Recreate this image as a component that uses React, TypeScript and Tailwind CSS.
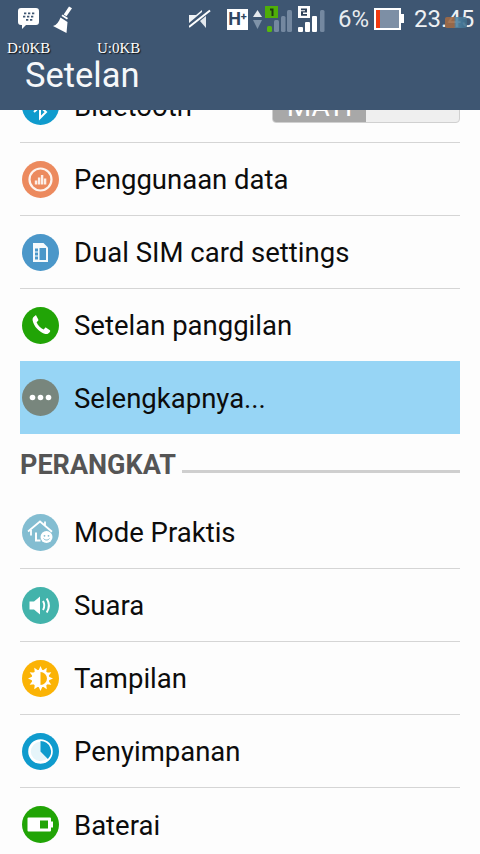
import React from 'react';

const Circle: React.FC<{ color: string; children?: React.ReactNode }> = ({ color, children }) => (
  <svg width="37" height="37" viewBox="0 0 37 37" className="shrink-0">
    <circle cx="18.5" cy="18.5" r="18.5" fill={color} />
    {children}
  </svg>
);

const DataIcon = () => (
  <Circle color="#ec8a5e">
    <circle cx="18.5" cy="18.5" r="11" fill="none" stroke="#fff" strokeWidth="2.2" opacity="0.9" />
    <path d="M12.8 19.5h2.5v4h-2.500zM15.900 16.500h2.400v7h-2.400zM18.900 14h2.400v9.500h-2.400zM21.900 17.500h2.400v6h-2.400z" fill="#fff" opacity="0.85" />
  </Circle>
);

const SimIcon = () => (
  <Circle color="#4b97c9">
    <path d="M11 9h10.500l4.500 4.500V28H11z" fill="#fff" opacity="0.95" />
    <path d="M13 14.500h3v3h-3zM13 18.500h3v3h-3zM13 22.500h3v3h-3zM17.500 14h6.500v12h-6.500z" fill="#4b97c9" />
  </Circle>
);

const PhoneIcon = () => (
  <Circle color="#21a406">
    <path d="M13.200 8.800c-1.600.8-3 2.300-2.600 4.500 1.100 6.100 6.900 12.300 12.700 13.700 2.300.5 3.900-1 4.800-2.600.2-.4.100-.8-.2-1.100l-3.700-2.500c-.4-.3-.9-.2-1.200.1l-1.400 1.500c-3-1.100-5.900-4.100-7-7.200l1.500-1.400c.3-.3.400-.8.200-1.200l-2-3.900c-.2-.5-.7-.6-1.100-.3z" fill="#fff" />
  </Circle>
);

const MoreIcon = () => (
  <Circle color="#78867d">
    <circle cx="10.500" cy="18.500" r="2.800" fill="#fff" />
    <circle cx="18.500" cy="18.500" r="2.800" fill="#fff" />
    <circle cx="26.500" cy="18.500" r="2.800" fill="#fff" />
  </Circle>
);

const HomeIcon = () => (
  <Circle color="#83bdd1">
    <path d="M6 17.500 18 7.500l5 4.200V7.500M23 11.700l7 6" fill="none" stroke="#fff" strokeWidth="1.800" />
    <path d="M9 16v5.500" fill="none" stroke="#fff" strokeWidth="1.800" />
    <path d="M14 18.500v8h4.500" fill="none" stroke="#fff" strokeWidth="2" />
    <circle cx="24.500" cy="23" r="6" fill="#fff" />
    <circle cx="22.500" cy="21.800" r="0.900" fill="#83bdd1" />
    <circle cx="26.500" cy="21.800" r="0.900" fill="#83bdd1" />
    <path d="M21.500 24.500c1.500 2 4.500 2 6 0" fill="none" stroke="#83bdd1" strokeWidth="1" />
  </Circle>
);

const SoundIcon = () => (
  <Circle color="#43b3ab">
    <path d="M7.500 14.500h4.500l6-5v18l-6-5H7.500z" fill="#fff" />
    <path d="M21 14c1.600 2.800 1.600 6.200 0 9M24.700 11.500c2.700 4.300 2.700 9.700 0 14" fill="none" stroke="#fff" strokeWidth="2" />
  </Circle>
);

const SunIcon = () => {
  const rays = Array.from({ length: 12 }, (_, i) => i * 30);
  return (
    <Circle color="#fbb305">
      {rays.map(r => (
        <path key={r} d="M18.500 6l2 4.500h-4z" fill="#fff" transform={`rotate(${r} 18.500 18.500)`} />
      ))}
      <circle cx="18.500" cy="18.500" r="9" fill="#fff" />
      <path d="M18.500 12a6.500 6.500 0 0 1 0 13z" fill="#fbb305" />
    </Circle>
  );
};

const StorageIcon = () => (
  <Circle color="#0f9bcd">
    <circle cx="18.500" cy="18.500" r="11" fill="#e6f5fa" stroke="#fff" strokeWidth="2.600" />
    <path d="M18.500 8.500a10 10 0 1 1-10 10 10 10 0 0 1 2.900-7l7.100 7z" fill="none" />
    <path d="M18.500 8a10.500 10.500 0 0 1 7.400 17.900L18.500 18.500z" fill="#0f9bcd" />
  </Circle>
);

const BatteryIcon = () => (
  <Circle color="#21a406">
    <path d="M6.500 11.500h21.500a1 1 0 0 1 1 1v3h2v6h-2v3a1 1 0 0 1-1 1H6.500a1 1 0 0 1-1-1v-12a1 1 0 0 1 1-1z" fill="#fff" />
    <rect x="18" y="14.500" width="8" height="8" fill="#21a406" />
  </Circle>
);

const BluetoothIcon = () => (
  <Circle color="#0f9bcd">
    <path d="M12 13l12 11-6 6V7l6 6-12 11" fill="none" stroke="#fff" strokeWidth="2" />
  </Circle>
);

const Row: React.FC<{ icon: React.ReactNode; label: string; active?: boolean; last?: boolean; short?: boolean; right?: React.ReactNode }> = ({
  icon,
  label,
  active,
  last,
  short,
  right,
}) => (
  <div
    className={`flex items-center ${short ? 'h-[72px]' : 'h-[73px]'} pl-[2px] ${active ? 'bg-[#97d5f5]' : ''} ${
      last ? '' : 'border-b border-[#d5d5d5]'
    }`}
  >
    {icon}
    <span className="ml-[15px] pt-[2px] text-[27.5px] leading-none text-[#0c0c0c] whitespace-nowrap">{label}</span>
    {right}
  </div>
);

const StatusBar = () => (
  <div className="flex items-center h-[38px] pl-[17px] text-white">
    <svg width="23" height="24" viewBox="0 0 23 24">
      <path d="M4 1h15a3 3 0 0 1 3 3v11a3 3 0 0 1-3 3H9l-4 4v-4H4a3 3 0 0 1-3-3V4a3 3 0 0 1 3-3z" fill="#fff" />
      <path d="M7 5.500h2.300v1.800H7zM11 5.500h2.300v1.800H11zM15 5.500h2.300v1.800H15zM6 8.800h2.300v1.800H6zM10 8.800h2.300v1.800H10zM14 8.800h2.300v1.800H14zM9 12h2.300v1.800H9zM13 12h2.300v1.800H13z" fill="#3e5672" />
    </svg>
    <svg width="20" height="27" viewBox="0 0 20 27" className="ml-[13px]">
      <path d="M16 0.500l3 1.700-5.500 8-2.800-1.700z" fill="#fff" />
      <path d="M9.500 8.500l5.500 3.500-1 1.500-5.500-3.500z" fill="#fff" />
      <path d="M7.500 11.500l7 4.500L13.500 27 0 20c3.500-1 6-4 7.500-8.500z" fill="#fff" />
    </svg>
    <svg width="22" height="20" viewBox="0 0 22 20" className="ml-[116px]">
      <path d="M0 6h7l6-5v2L0 14z" fill="#f0f3f6" />
      <path d="M11 12l6-5v12z" fill="#e3e8ed" />
      <path d="M0 18 21 1.500" stroke="#fff" strokeWidth="2" fill="none" />
    </svg>
    <div className="ml-[16px] w-[21px] h-[21px] bg-white flex items-center justify-center text-[#2f4660] text-[18px] font-bold leading-none">
      H<span className="text-[11px] -mt-[6px]">+</span>
    </div>
    <svg width="9" height="19" viewBox="0 0 9 19" className="ml-[5px]">
      <path d="M4.500 0L9 7H0z" fill="#e5e9ed" />
      <path d="M4.500 19L9 10H0z" fill="#7f93a8" />
    </svg>
    <svg width="28" height="27" viewBox="0 0 28 27" className="ml-[3px] mt-[1px]">
      <rect x="0" y="0" width="13" height="12" fill="#4fae08" />
      <path d="M5 2.500h3.500v7.500H6.500V4.500H5z" fill="#1c3a10" />
      <rect x="2" y="20" width="5" height="6" rx="1.500" fill="#58b80c" />
      <rect x="9" y="14" width="5" height="12" rx="1.500" fill="#7488a0" />
      <rect x="16" y="10" width="4.500" height="16" rx="1.500" fill="#7488a0" />
      <rect x="22" y="4" width="5" height="22" rx="1.500" fill="#7488a0" />
    </svg>
    <svg width="27" height="27" viewBox="0 0 27 27" className="ml-[5px] mt-[1px]">
      <rect x="0" y="0" width="12" height="12" fill="#fff" />
      <path d="M3 2.500h6v4H5v1.500h4v1.800H3V5.200h4V4.200H3z" fill="#2c4058" />
      <rect x="0" y="21" width="5" height="5" rx="1" fill="#fff" />
      <rect x="7" y="16" width="5" height="10" rx="1" fill="#fff" />
      <rect x="14" y="10" width="5" height="16" rx="1" fill="#fff" />
      <rect x="22" y="4" width="4.500" height="22" rx="1.500" fill="#7488a0" />
    </svg>
    <span className="ml-[13px] text-[24px] leading-none text-[#e7ebef]">6%</span>
    <svg width="30" height="22" viewBox="0 0 30 22" className="ml-[5px]">
      <path d="M0 0h27v6h3v9h-3v7H0z" fill="#fff" />
      <rect x="2" y="2" width="23" height="18" fill="#7d8fa5" />
      <rect x="2" y="2" width="4" height="18" fill="#f23a10" />
    </svg>
    <div className="relative ml-[10px] h-[24px]">
      <span className="text-[24px] leading-none text-[#eef1f4]">23.45</span>
      <div className="absolute left-[31px] top-[10px] w-[22px] h-[11px] rounded-[2px] bg-[linear-gradient(90deg,#a06a45_0%,#a06a45_40%,#4f86a8_50%,#3e6b88_100%)] opacity-90" />
    </div>
  </div>
);

export default function App() {
  return (
    <div className="relative w-[480px] h-[854px] overflow-hidden bg-[#fdfdfd] font-['Roboto',sans-serif]">
      <header className="relative z-10 h-[110px] bg-[#3e5672]">
        <StatusBar />
        <div className="flex h-[20px] items-center pl-[7px] font-['Liberation_Serif',serif] text-[15px] leading-none text-white [text-shadow:1px_1px_1px_#111]">
          <span className="w-[90px]">D:0KB</span>
          <span>U:0KB</span>
        </div>
        <h1 className="pl-[25px] text-[34.500px] leading-none font-normal text-[#f6f8fa]">Setelan</h1>
      </header>

      <div className="-mt-[40px] mx-[20px]">
        <Row
          icon={<BluetoothIcon />}
          label="Bluetooth"
          right={
            <div className="ml-auto flex w-[188px] h-[34px] rounded-[4px] border border-[#d0d0d0] bg-[#efefef] overflow-hidden">
              <div className="w-[93px] bg-[#a8a8a8] text-white text-[28px] leading-[34px] text-center">MATI</div>
            </div>
          }
        />
        <Row icon={<DataIcon />} label="Penggunaan data" />
        <Row icon={<SimIcon />} label="Dual SIM card settings" />
        <Row icon={<PhoneIcon />} label="Setelan panggilan" last short />
        <Row icon={<MoreIcon />} label="Selengkapnya..." active last />

        <div className="flex items-end h-[48px] pb-[3px]">
          <span className="text-[27px] font-bold leading-none text-[#555555] whitespace-nowrap">PERANGKAT</span>
          <div className="flex-1 ml-[6px] mb-[6px] h-[3px] bg-[#cfcfcf]" />
        </div>
        <div className="h-[14px]" />
        <Row icon={<HomeIcon />} label="Mode Praktis" />
        <Row icon={<SoundIcon />} label="Suara" />
        <Row icon={<SunIcon />} label="Tampilan" />
        <Row icon={<StorageIcon />} label="Penyimpanan" />
        <Row icon={<BatteryIcon />} label="Baterai" last />
      </div>
    </div>
  );
}
